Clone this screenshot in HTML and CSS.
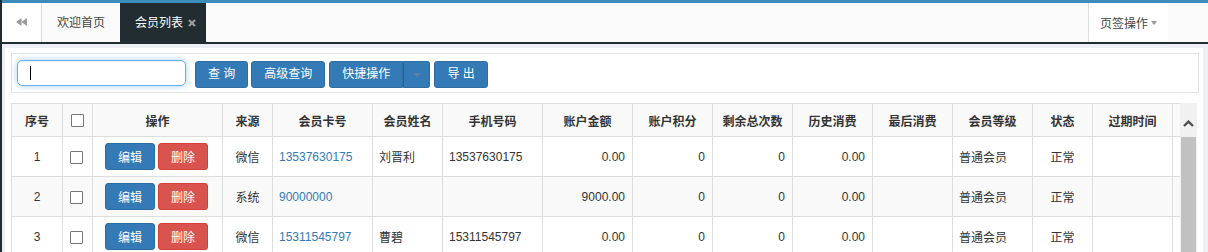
FILE: index.html
```html
<!DOCTYPE html>
<html lang="zh-CN">
<head>
<meta charset="utf-8">
<title>会员列表</title>
<link rel="stylesheet" href="styles.css">
</head>
<body>
<div class="topline"></div>
<div class="tabbar">
  <div class="tab-back">
    <svg width="11" height="8" viewBox="0 0 11 8"><polygon points="5.5,0 0,4 5.5,8" fill="#9a9a9a"/><polygon points="11,0 5.5,4 11,8" fill="#9a9a9a"/></svg>
  </div>
  <div class="tab">欢迎首页</div>
  <div class="tab tab-active">会员列表
    <svg class="tab-close" width="8" height="8" viewBox="0 0 8 8"><path d="M1 1 L7 7 M7 1 L1 7" stroke="#9a9a9a" stroke-width="2.2"/></svg>
  </div>
  <div class="tab-spacer"></div>
  <div class="tab-ops">页签操作<span class="caret-gray"></span></div>
  <div class="tab-tail"></div>
</div>
<div class="content">
  <div class="panel">
    <div class="toolbar">
      <div class="search"><span class="cursor"></span></div>
      <button class="btn btn-first">查 询</button>
      <button class="btn">高级查询</button>
      <div class="btn-group">
        <button class="btn btn-main">快捷操作</button>
        <button class="btn btn-caret"><span class="caret-dim"></span></button>
      </div>
      <button class="btn">导 出</button>
    </div>
    <div class="grid-wrap">
      <div class="grid-clip">
        <table class="grid">
          <colgroup>
            <col style="width:51px"><col style="width:30px"><col style="width:130px"><col style="width:50px">
            <col style="width:100px"><col style="width:70px"><col style="width:100px"><col style="width:90px">
            <col style="width:80px"><col style="width:80px"><col style="width:80px"><col style="width:80px">
            <col style="width:80px"><col style="width:60px"><col style="width:80px"><col style="width:80px">
          </colgroup>
          <thead>
            <tr>
              <th>序号</th><th><span class="chk"></span></th><th>操作</th><th>来源</th><th>会员卡号</th><th>会员姓名</th><th>手机号码</th><th>账户金额</th><th>账户积分</th><th>剩余总次数</th><th>历史消费</th><th>最后消费</th><th>会员等级</th><th>状态</th><th>过期时间</th><th></th>
            </tr>
          </thead>
          <tbody>
            <tr>
              <td class="c">1</td><td class="c"><span class="chk chk-row"></span></td>
              <td class="c"><span class="ops"><button class="mini mini-edit">编辑</button><button class="mini mini-del">删除</button></span></td>
              <td class="c">微信</td><td class="l"><span class="link">13537630175</span></td><td class="l">刘晋利</td><td class="l">13537630175</td>
              <td class="r">0.00</td><td class="r">0</td><td class="r">0</td><td class="r">0.00</td><td class="l"></td><td class="l">普通会员</td><td class="c">正常</td><td class="l"></td><td class="l"></td>
            </tr>
            <tr class="odd">
              <td class="c">2</td><td class="c"><span class="chk chk-row"></span></td>
              <td class="c"><span class="ops"><button class="mini mini-edit">编辑</button><button class="mini mini-del">删除</button></span></td>
              <td class="c">系统</td><td class="l"><span class="link">90000000</span></td><td class="l"></td><td class="l"></td>
              <td class="r">9000.00</td><td class="r">0</td><td class="r">0</td><td class="r">0.00</td><td class="l"></td><td class="l">普通会员</td><td class="c">正常</td><td class="l"></td><td class="l"></td>
            </tr>
            <tr>
              <td class="c">3</td><td class="c"><span class="chk chk-row"></span></td>
              <td class="c"><span class="ops"><button class="mini mini-edit">编辑</button><button class="mini mini-del">删除</button></span></td>
              <td class="c">微信</td><td class="l"><span class="link">15311545797</span></td><td class="l">曹碧</td><td class="l">15311545797</td>
              <td class="r">0.00</td><td class="r">0</td><td class="r">0</td><td class="r">0.00</td><td class="l"></td><td class="l">普通会员</td><td class="c">正常</td><td class="l"></td><td class="l"></td>
            </tr>
          </tbody>
        </table>
      </div>
      <div class="vscroll">
        <div class="vs-arrow">
          <svg width="11" height="7" viewBox="0 0 11 7"><polyline points="1,6 5.5,1.6 10,6" fill="none" stroke="#505050" stroke-width="2.4"/></svg>
        </div>
        <div class="vs-thumb"></div>
      </div>
    </div>
  </div>
</div>
</body>
</html>
```

FILE: styles.css
```css
* { box-sizing: border-box; }
html, body { margin: 0; padding: 0; }
body {
  width: 1208px;
  height: 252px;
  overflow: hidden;
  background: #ecf0f5;
  border-left: 2px solid #222d32;
  font-family: "Liberation Sans", Arial, "Noto Sans CJK SC", sans-serif;
  font-size: 12px;
  color: #333;
  display: flex;
  flex-direction: column;
}
.topline { height: 3px; flex-shrink: 0; background: #3c8dbc; }
.tabbar {
  height: 41px;
  flex-shrink: 0;
  display: flex;
  background: #fafafa;
  border-bottom: 2px solid #222d32;
}
.tab-back {
  width: 40px;
  background: #fff;
  border-right: 1px solid #ddd;
  display: flex;
  align-items: center;
  justify-content: center;
  padding-bottom: 1px;
}
.tab {
  display: flex;
  align-items: center;
  padding: 0 15px;
  color: #444;
  line-height: 1;
}
.tab-active {
  background: #222d32;
  color: #fff;
  padding-right: 10px;
}
.tab-close { margin-left: 5px; }
.tab-spacer { flex: 1; }
.tab-ops {
  display: flex;
  align-items: center;
  background: #fff;
  border-left: 1px solid #ddd;
  padding: 0 11px;
  color: #444;
}
.caret-gray {
  width: 0; height: 0;
  margin-left: 3px;
  border-left: 3.5px solid transparent;
  border-right: 3.5px solid transparent;
  border-top: 4px solid #999;
}
.tab-tail { width: 40px; }
.content {
  flex: 1;
  min-height: 0;
  overflow: hidden;
  padding: 4px 5px 0 3px;
  display: flex;
  flex-direction: column;
}
.panel {
  flex: 1;
  min-height: 0;
  background: #fff;
  padding: 5px 4px 0 6px;
}
.toolbar {
  height: 40px;
  border: 1px solid #e3e3e3;
  display: flex;
  align-items: flex-start;
  padding: 6px 5px 0;
}
.search {
  width: 169px;
  height: 26px;
  border: 1px solid #66afe9;
  border-radius: 5px;
  box-shadow: inset 0 1px 1px rgba(0,0,0,.075), 0 0 6px rgba(102,175,233,.6);
  padding: 6px 12px;
  display: flex;
  align-items: center;
}
.cursor { width: 1px; height: 14px; background: #000; }
.btn {
  height: 27px;
  margin-top: 1px;
  margin-left: 3px;
  padding: 0 12px;
  border: 1px solid #2e6da4;
  border-radius: 3px;
  background: #337ab7;
  color: #fff;
  font-family: inherit;
  font-size: 12px;
  line-height: 25px;
}
.btn-first { margin-left: 9px; }
.btn-group { display: flex; margin-left: 4px; margin-right: 1px; }
.btn-group .btn { margin-left: 0; }
.btn-main { border-radius: 3px 0 0 3px; }
.btn-caret {
  width: 27px;
  padding: 0;
  border-left-color: #296396;
  border-radius: 0 3px 3px 0;
  display: flex;
  align-items: center;
  justify-content: center;
}
.caret-dim {
  width: 0; height: 0;
  border-left: 4px solid transparent;
  border-right: 4px solid transparent;
  border-top: 4px solid #5f7fa5;
}
.grid-wrap {
  display: flex;
  margin-top: 10px;
  margin-right: 2px;
}
.grid-clip { width: 1169px; overflow: hidden; }
.grid {
  border-collapse: collapse;
  table-layout: fixed;
  width: 1241px;
}
.grid th, .grid td {
  border: 1px solid #ddd;
  padding: 0 6px;
  white-space: nowrap;
  overflow: hidden;
}
.grid th {
  height: 33px;
  background: #f9f9f9;
  font-weight: bold;
  text-align: center;
  color: #333;
}
.grid td { height: 40px; }
.grid tr.odd td { background: #f9f9f9; }
.grid .c { text-align: center; }
.grid .l { text-align: left; }
.grid .r { text-align: right; padding-right: 7px; }
.link { color: #337ab7; }
.chk {
  display: inline-block;
  width: 13px;
  height: 13px;
  border: 1px solid #767676;
  border-radius: 1px;
  background: #fff;
  vertical-align: middle;
}
.chk-row { margin-right: 3px; }
.ops { display: inline-flex; gap: 3px; vertical-align: middle; margin-right: 2px; }
.mini {
  width: 50px;
  height: 27px;
  border-radius: 3px;
  color: #fff;
  font-family: inherit;
  font-size: 12px;
  padding: 0;
}
.mini-edit { background: #337ab7; border: 1px solid #2e6da4; }
.mini-del { background: #d9534f; border: 1px solid #d43f3a; }
.vscroll {
  width: 17px;
  background: #f1f1f1;
  display: flex;
  flex-direction: column;
  padding-top: 17px;
  height: 160px;
}
.vs-arrow {
  height: 17px;
  display: flex;
  align-items: flex-start;
  justify-content: center;
}
.vs-thumb { flex: 1; background: #c1c1c1; margin: 0 1px; }
```
